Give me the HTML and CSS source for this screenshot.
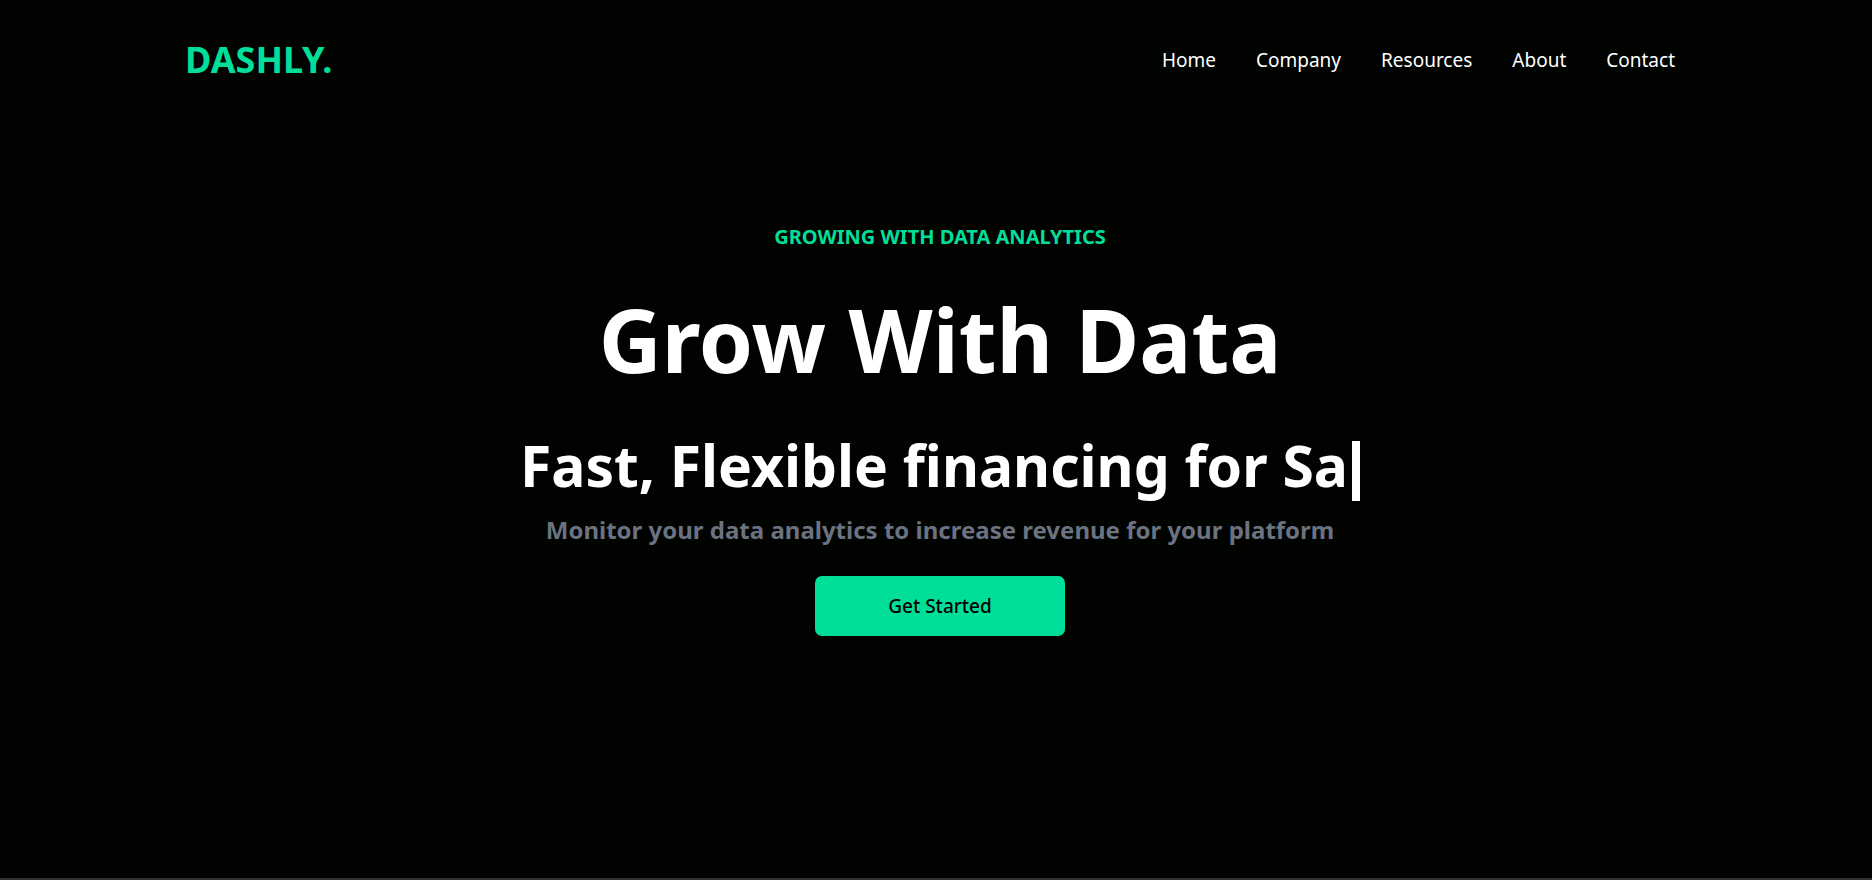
FILE: index.html
```html
<!DOCTYPE html>
<html lang="en">
<head>
<meta charset="utf-8">
<title>Dashly</title>
<link rel="stylesheet" href="styles.css">
</head>
<body>
<header class="navbar">
  <h1 class="logo">DASHLY.</h1>
  <nav class="menu">
    <a href="#">Home</a>
    <a href="#">Company</a>
    <a href="#">Resources</a>
    <a href="#">About</a>
    <a href="#">Contact</a>
  </nav>
</header>
<main class="hero">
  <p class="eyebrow">GROWING WITH DATA ANALYTICS</p>
  <h2 class="title">Grow With Data</h2>
  <p class="typed">Fast, Flexible financing for Sa<span class="cursor"></span></p>
  <p class="lead">Monitor your data analytics to increase revenue for your platform</p>
  <button class="cta" type="button">Get Started</button>
</main>
</body>
</html>
```
FILE: styles.css
```css
* { box-sizing: border-box; margin: 0; padding: 0; }
body {
  min-height: 100vh;
  padding-left: 8px;
  background: #000300;
  color: #fff;
  font-family: "Noto Sans", "Open Sans", sans-serif;
  border-bottom: 2px solid #333;
}
.navbar {
  display: flex;
  align-items: center;
  justify-content: space-between;
  max-width: 1550px;
  margin: 0 auto;
  padding: 36px 20px 0;
}
.logo { color: #00df9a; font-size: 36px; line-height: 48px; font-weight: 700; }
.menu { display: flex; gap: 40px; padding-right: 20px; }
.menu a { color: inherit; text-decoration: none; font-size: 19px; line-height: 30px; }
.hero { display: flex; flex-direction: column; align-items: center; padding-top: 137px; text-align: center; }
.eyebrow { color: #00df9a; font-size: 20px; line-height: 32px; font-weight: 700; }
.title { margin-top: 38px; font-size: 87px; line-height: 96px; font-weight: 700; }
.typed { display: flex; align-items: center; margin-top: 42px; font-size: 57px; line-height: 72px; font-weight: 700; }
.cursor { width: 8px; height: 60px; margin-left: 4px; margin-top: 12px; background: #fff; }
.lead { margin-top: 13px; color: #6b7280; font-size: 24px; line-height: 32px; font-weight: 700; }
.cta { width: 250px; height: 60px; margin-top: 30px; border: 0; border-radius: 7px; background: #00df9a; color: #000; font: 500 19px "Noto Sans", "Open Sans", sans-serif; }
```
